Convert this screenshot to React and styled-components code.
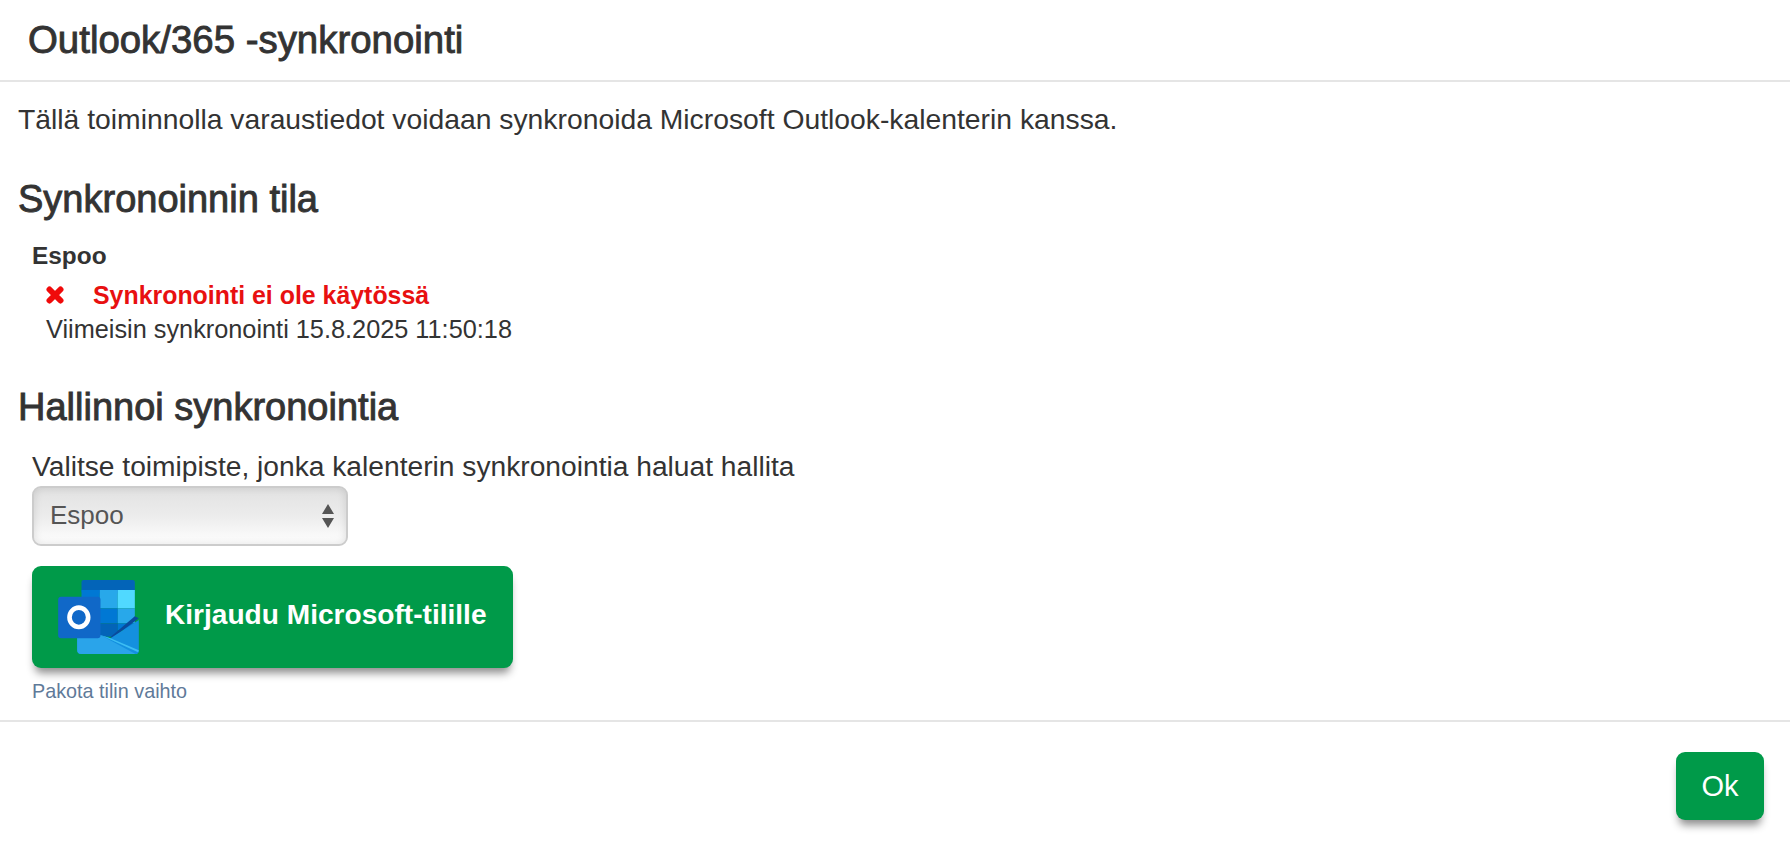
import styled, { createGlobalStyle } from "styled-components";

const GlobalStyle = createGlobalStyle`
  html, body {
    margin: 0;
    padding: 0;
    background: #fff;
  }
  body {
    font-family: "Liberation Sans", Arial, sans-serif;
    color: #333;
    overflow: hidden;
  }
`;

const Dialog = styled.div`
  width: 1790px;
  height: 842px;
  display: flex;
  flex-direction: column;
  background: #fff;
`;

const Header = styled.header`
  height: 82px;
  box-sizing: border-box;
  padding: 0 28px;
  display: flex;
  align-items: center;
  border-bottom: 2px solid #e5e5e5;
`;

const Title = styled.h1`
  margin: 0;
  font-size: 38.4px;
  font-weight: 400;
  color: #333;
  -webkit-text-stroke: 0.9px #333;
`;

const Content = styled.main`
  height: 640px;
  box-sizing: border-box;
  padding: 0 18px;
  border-bottom: 2px solid #e5e5e5;
`;

const Intro = styled.p`
  margin: 21px 0 0;
  font-size: 28.3px;
  line-height: 32px;
  color: #333;
`;

const SectionTitle = styled.h2`
  margin: ${(p) => p.$top}px 0 0;
  font-size: 38px;
  line-height: 44px;
  font-weight: 400;
  color: #333;
  -webkit-text-stroke: 0.9px #333;
`;

const Indent = styled.div`
  padding-left: 14px;
`;

const Location = styled.div`
  margin-top: 19px;
  font-size: 24.4px;
  line-height: 32px;
  font-weight: 700;
  color: #333;
`;

const Status = styled.div`
  margin-top: 6px;
  padding-left: 14px;
  display: flex;
  align-items: center;
  gap: 29px;
  height: 34px;
  font-size: 24.9px;
  font-weight: 700;
  color: #e81010;
`;

const LastSync = styled.div`
  padding-left: 14px;
  font-size: 25.3px;
  line-height: 34px;
  color: #333;
`;

const FieldLabel = styled.div`
  margin-top: 20px;
  font-size: 28.2px;
  line-height: 34px;
  color: #333;
`;

const SelectWrap = styled.div`
  position: relative;
  width: 316px;
  height: 60px;
  margin-top: 3px;
`;

const Select = styled.select`
  appearance: none;
  -webkit-appearance: none;
  width: 100%;
  height: 100%;
  box-sizing: border-box;
  padding: 0 16px 2px;
  border: 2px solid #ccc;
  border-radius: 9px;
  font-family: inherit;
  font-size: 26px;
  color: #555;
  background: linear-gradient(180deg, #e2e2e2 0%, #ececec 50%, #fff 100%);
  box-shadow: inset 0 0 8px rgba(0, 0, 0, 0.12);
  outline: none;
`;

const SelectArrows = styled.svg`
  position: absolute;
  top: 17px;
  right: 13px;
  width: 14px;
  pointer-events: none;
`;

const LoginButton = styled.button`
  margin-top: 20px;
  width: 481px;
  height: 102px;
  padding: 0 0 0 26px;
  display: flex;
  align-items: center;
  gap: 26px;
  border: 0;
  border-radius: 9px;
  background: #009a49;
  color: #fff;
  font-family: inherit;
  font-size: 28.1px;
  font-weight: 700;
  box-shadow: 0 8px 9px -3px rgba(0, 0, 0, 0.45);
`;

const LoginLabel = styled.span`
  margin-bottom: 4px;
`;

const SwitchLink = styled.a`
  display: block;
  margin-top: 11px;
  font-size: 19.8px;
  line-height: 24px;
  color: #5f7a99;
`;

const Footer = styled.footer`
  flex: 1;
  box-sizing: border-box;
  padding: 30px 26px 0 0;
  display: flex;
  justify-content: flex-end;
  align-items: flex-start;
`;

const OkButton = styled.button`
  width: 88px;
  height: 68px;
  border: 0;
  border-radius: 9px;
  background: #009a49;
  color: #fff;
  font-family: inherit;
  font-size: 29px;
  box-shadow: 0 8px 9px -3px rgba(0, 0, 0, 0.45);
`;

const CrossIcon = () => (
  <svg width="18" height="18" viewBox="0 0 18 18">
    <path d="M3.5 3.5 L14.5 14.5 M14.5 3.5 L3.5 14.5" stroke="#f00a0a" strokeWidth="6" strokeLinecap="round" />
  </svg>
);

const OutlookIcon = () => (
  <svg width="81" height="74" viewBox="8 15 242 222">
    <rect x="78" y="15" width="160" height="40" rx="6" fill="#0364b8" />
    <rect x="78" y="45" width="55" height="55" fill="#0078d4" />
    <rect x="133" y="45" width="54" height="55" fill="#28a8ea" />
    <rect x="187" y="45" width="51" height="55" fill="#50d9ff" />
    <rect x="78" y="100" width="55" height="45" fill="#0364b8" />
    <rect x="133" y="100" width="54" height="45" fill="#0078d4" />
    <rect x="187" y="100" width="51" height="45" fill="#28a8ea" />
    <rect x="78" y="145" width="55" height="40" fill="#064a8c" />
    <rect x="133" y="145" width="54" height="40" fill="#0364b8" />
    <rect x="187" y="145" width="51" height="20" fill="#0078d4" />
    <path d="M165 186 L238 124 L250 130 L170 190 Z" fill="#0a4a9c" />
    <path d="M65 160 L65 225 Q65 237 77 237 L240 237 Q250 237 250 227 L250 135 L165 190 Z" fill="#1490df" />
    <path d="M65 170 L135 180 L240 237 L77 237 Q65 237 65 225 Z" fill="#2aa4ea" />
    <path d="M135 180 L165 190 L250 226 L248 232 Z" fill="#3cbdf3" />
    <rect x="8" y="65" width="127" height="125" rx="9" fill="#1068c8" />
    <ellipse cx="70" cy="127" rx="28" ry="29" fill="none" stroke="#fff" strokeWidth="14" />
  </svg>
);

export default function App() {
  return (
    <>
      <GlobalStyle />
      <Dialog>
        <Header>
          <Title>Outlook/365 -synkronointi</Title>
        </Header>
        <Content>
          <Intro>Tällä toiminnolla varaustiedot voidaan synkronoida Microsoft Outlook-kalenterin kanssa.</Intro>
          <SectionTitle $top={42}>Synkronoinnin tila</SectionTitle>
          <Indent>
            <Location>Espoo</Location>
            <Status>
              <CrossIcon />
              Synkronointi ei ole käytössä
            </Status>
            <LastSync>Viimeisin synkronointi 15.8.2025 11:50:18</LastSync>
          </Indent>
          <SectionTitle $top={39}>Hallinnoi synkronointia</SectionTitle>
          <Indent>
            <FieldLabel>Valitse toimipiste, jonka kalenterin synkronointia haluat hallita</FieldLabel>
            <SelectWrap>
              <Select defaultValue="Espoo">
                <option>Espoo</option>
              </Select>
              <SelectArrows viewBox="0 0 14 26">
                <path d="M7 1 L13 11 L1 11 Z M1 15 L13 15 L7 25 Z" fill="#555" />
              </SelectArrows>
            </SelectWrap>
            <LoginButton>
              <OutlookIcon />
              <LoginLabel>Kirjaudu Microsoft-tilille</LoginLabel>
            </LoginButton>
            <SwitchLink>Pakota tilin vaihto</SwitchLink>
          </Indent>
        </Content>
        <Footer>
          <OkButton>Ok</OkButton>
        </Footer>
      </Dialog>
    </>
  );
}
